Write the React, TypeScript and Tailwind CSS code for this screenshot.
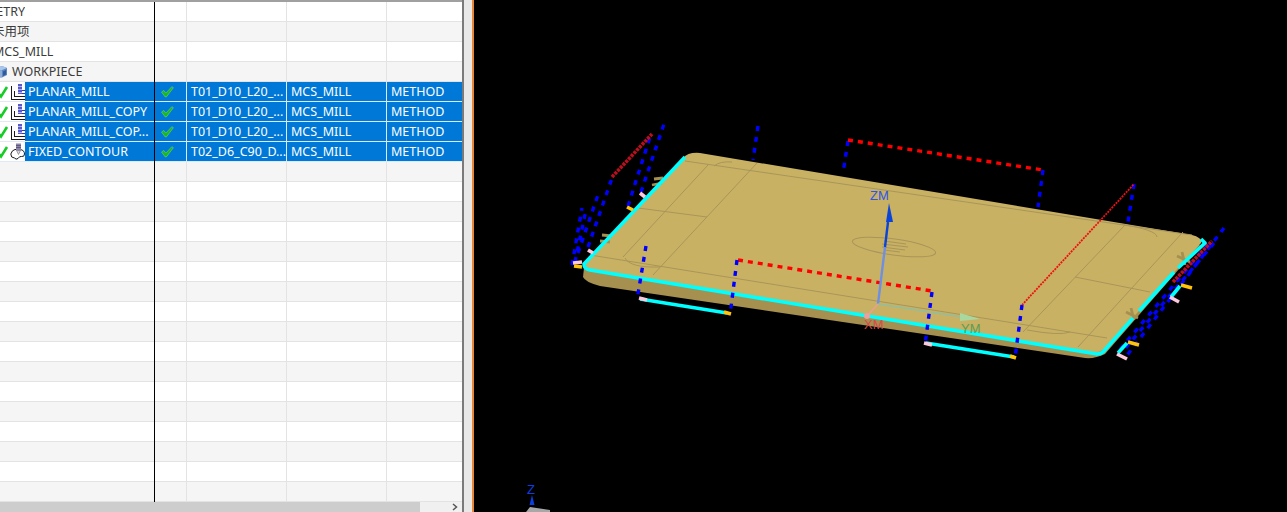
import React from "react";

const FONT = "font-['Noto_Sans','Noto_Sans_CJK_SC',sans-serif]";

const Check = ({ className }: { className: string }) => (
  <svg viewBox="0 0 12 12" className={className}>
    <path d="M0.5 6.5 L2.5 5 L4.5 7.5 L10 1.5 L11.5 2.5 L5 11 L3.8 11 Z" fill="#1cb81c" stroke="#8de88f" strokeWidth="0.4" />
  </svg>
);

const LeftCheck = () => (
  <svg viewBox="0 0 9 14" className="w-[9px] h-[14px] shrink-0">
    <path d="M-1 9 L1 11.5 L7 2" fill="none" stroke="#16cc26" strokeWidth="2.6" />
  </svg>
);

const PlanarIcon = () => (
  <svg viewBox="0 0 15 18" className="w-[15px] h-[18px] shrink-0" shapeRendering="crispEdges">
    <rect x="1" y="1" width="14" height="16" fill="#ffffff" />
    <path d="M1.5 3 V16.5 H15" fill="none" stroke="#1a1a1a" strokeWidth="1" />
    <path d="M4.5 8 V13.5 H15" fill="none" stroke="#1a1a1a" strokeWidth="1" />
    <rect x="8" y="1" width="4" height="10" fill="#5b5bc8" />
    <path d="M8 3.5 H12 M8 6.5 H12 M8 9.5 H12" stroke="#b2b2ee" strokeWidth="1" />
    <path d="M12 7.5 H15 M12 10.5 H15" stroke="#3434c0" strokeWidth="1" />
  </svg>
);

const ContourIcon = () => (
  <svg viewBox="0 0 15 18" className="w-[15px] h-[18px] shrink-0">
    <path d="M0.8 11 Q2 7 5 6.5 L10 6.5 Q14.5 7 14.5 11 Q14.5 14 11.5 13.5 Q9.5 13 8 15.5 Q6 17 4.5 15 Q0.8 15 0.8 11 Z" fill="#fff" stroke="#1a1a1a" strokeWidth="1" />
    <rect x="6" y="0.5" width="5" height="7" fill="#8c86a8" />
    <path d="M6 2.5 H11 M6 4.5 H11" stroke="#4b4670" strokeWidth="0.7" />
    <path d="M6.5 7.5 L8.5 11.5 L10.5 7.5 Z" fill="#d9d6e6" stroke="#555" strokeWidth="0.5" />
  </svg>
);

const CubeIcon = () => (
  <svg viewBox="0 0 13 14" className="w-[13px] h-[14px] shrink-0">
    <path d="M1 3.5 L7 1 L12 3 L12 10 L6 13 L1 10.5 Z" fill="#5b86c2" />
    <path d="M1 3.5 L7 1 L12 3 L6 5.5 Z" fill="#a9c7ea" />
    <path d="M6 5.5 V13" stroke="#dbe8f7" strokeWidth="0.8" />
    <path d="M8 6.5 L11 5 V9.5 L8 11 Z" fill="#2f5a9a" />
  </svg>
);

type Op = { name: string; tool: string; icon: "planar" | "contour" };

const ops: Op[] = [
  { name: "PLANAR_MILL", tool: "T01_D10_L20_...", icon: "planar" },
  { name: "PLANAR_MILL_COPY", tool: "T01_D10_L20_...", icon: "planar" },
  { name: "PLANAR_MILL_COP...", tool: "T01_D10_L20_...", icon: "planar" },
  { name: "FIXED_CONTOUR", tool: "T02_D6_C90_D...", icon: "contour" },
];

const Divs = () => (
  <>
    <div className="w-[32px] border-r border-[#e3e3e3]" />
    <div className="w-[100px] border-r border-[#e3e3e3]" />
    <div className="w-[100px] border-r border-[#e3e3e3]" />
    <div className="w-[75px]" />
  </>
);

const HeadRow = ({ children, alt }: { children: React.ReactNode; alt?: boolean }) => (
  <div className={`flex h-[20px] shrink-0 border-b border-[#e3e3e3] ${alt ? "bg-[#f5f5f5]" : "bg-white"}`}>
    <div className="w-[155px] pt-[1px] flex items-center overflow-hidden whitespace-nowrap text-[#3c3c3c]">{children}</div>
    <Divs />
  </div>
);

const OpRow = ({ op }: { op: Op }) => (
  <div className="flex h-[20px] shrink-0 bg-white">
    <div className="w-[155px] flex items-center border-b border-[#dfeaf5]">
      <LeftCheck />
      <div className="w-[16px] flex justify-center">
        {op.icon === "planar" ? <PlanarIcon /> : <ContourIcon />}
      </div>
      <div className="h-[19px] flex-1 bg-[#0078d7] text-white pl-[3px] whitespace-nowrap leading-[19px] overflow-hidden">{op.name}</div>
    </div>
    <div className="w-[32px] h-full bg-[#0078d7] border-r border-b border-[#dcebf7] flex items-center justify-center pr-[7px]">
      <Check className="w-[13px] h-[13px]" />
    </div>
    <div className="w-[100px] h-full bg-[#0078d7] border-r border-b border-[#dcebf7] text-white pl-[4px] leading-[19px] whitespace-nowrap overflow-hidden">{op.tool}</div>
    <div className="w-[100px] h-full bg-[#0078d7] border-r border-b border-[#dcebf7] text-white pl-[4px] leading-[19px]">MCS_MILL</div>
    <div className="w-[75px] h-full bg-[#0078d7] border-b border-[#dcebf7] text-white pl-[4px] leading-[19px]">METHOD</div>
  </div>
);

const Viewport = () => (
  <svg viewBox="474 0 813 512" className="w-full h-full block" shapeRendering="geometricPrecision">
    {/* back construction lines */}
    <g fill="none" stroke="#0000ff" strokeWidth="3.4" strokeDasharray="5 6">
      <path d="M572 265 L582 208" />
      <path d="M575 262 L586 210" />
      <path d="M578 253 L599 192" />
      <path d="M588 247 L612 178" />
      <path d="M628 206 L651 134" />
      <path d="M641 192 L664 124" />
      <path d="M758 126 L753 160" />
      <path d="M848 141 L843 173" />
      <path d="M1043 170 L1038 207" />
      <path d="M1134 184 L1128 222" />
      <path d="M1224 228 L1125 358" />
      <path d="M1208 244 L1118 352" />
      <path d="M1214 243 L1124 350" />
    </g>
    <path d="M612 177 L652 134" stroke="#b8101e" strokeWidth="3.6" strokeDasharray="3 1" />
    <path d="M1173 282 L1212 241" stroke="#b8101e" strokeWidth="3.6" strokeDasharray="3 1" />
    <path d="M848 140 L1043 170" stroke="#ff0000" strokeWidth="3.4" strokeDasharray="5 5" fill="none" />

    {/* plate */}
    <path d="M584 268 L583 277 Q585 282 600 286 L1085 358 Q1095 359 1105 354 L1200 245 Z" fill="#a5904f" />
    <path d="M683 158 Q688 152 700 153 L1192 235 Q1203 238 1201 243 L1106 347 Q1100 354 1088 353 L592 271 Q582 268 585 263 Z" fill="#c9b163" />

    {/* tabs */}
    <g stroke="#a5904f" strokeWidth="2.8" fill="none">
      <path d="M602 235 L612 236 M600 241 L610 242" />
      <path d="M654 179 L663 178 M652 185 L662 183" />
      <path d="M1126 312 L1138 318 M1131 308 L1134 320" />
      <path d="M1177 256 L1190 262 M1182 252 L1185 265" />
    </g>

    {/* engraved lines */}
    <g stroke="#a8955a" strokeWidth="1" fill="none">
      <path d="M685 161 L1192 235" />
      <path d="M590 255 L1107 338" />
      <path d="M708 165 L623 257" />
      <path d="M757 163 L653 275" />
      <path d="M638 208 L707 217" />
      <path d="M714 166 Q720 161 732 162" />
      <path d="M625 258 Q630 268 660 267" />
      <path d="M1125 225 L1023 332" />
      <path d="M1183 232 L1078 347" />
      <path d="M1075 277 L1150 292" />
      <path d="M1120 224 Q1157 230 1157 237" />
      <path d="M1027 330 Q1060 336 1070 332" />
      <ellipse cx="894" cy="247" rx="42" ry="8" transform="rotate(8 894 247)" />
      <path d="M884 241 L906 244 M882 244 L908 247 M882 247 L905 250 M884 250 L900 252" />
    </g>

    {/* cyan contour */}
    <g fill="none" stroke="#00ffff" strokeLinejoin="round" strokeWidth="3.6">
      <path d="M685 157 L584 264 Q584 269 590 270 L1097 354 Q1101 354 1103 352 L1133 318" />
      <path d="M1139 311 L1174 272" />
      <path d="M1178 268 L1205 243 L1201 239" />
      <path d="M640 299 L727 313" />
      <path d="M926 343 L1014 357" />
      <path d="M1127 343 L1118 353" />
      <path d="M1180 286 L1171 297" />
    </g>

    {/* front red and blue dashes */}
    <path d="M738 260 L932 291" stroke="#ff0000" strokeWidth="3.4" strokeDasharray="5 5" fill="none" />
    <path d="M1022 305 L1134 184" stroke="#ee1111" strokeWidth="1.8" strokeDasharray="2 1" fill="none" />
    <g fill="none" stroke="#0000ff" strokeWidth="3.4" strokeDasharray="5 6">
      <path d="M646 246 L637 300" />
      <path d="M737 260 L730 315" />
      <path d="M932 292 L925 345" />
      <path d="M1022 305 L1015 358" />
    </g>

    {/* end markers */}
    <g fill="none" strokeWidth="3.6">
      <g stroke="#fbc8dc">
        <path d="M639 298 L647 300" />
        <path d="M924 343 L932 345" />
        <path d="M573 263 L582 262" />
        <path d="M588 250 L593 253" />
        <path d="M640 193 L645 197" />
        <path d="M1117 354 L1127 359" />
        <path d="M1170 297 L1179 302" />
      </g>
      <g stroke="#ffc40a">
        <path d="M724 312 L731 314" />
        <path d="M1010 356 L1016 358" />
        <path d="M574 266 L582 267" />
        <path d="M627 207 L633 210" />
        <path d="M1128 342 L1139 345" />
        <path d="M1181 285 L1192 288" />
      </g>
    </g>

    {/* MCS axes */}
    <path d="M878 304 L885 247" stroke="#6f90e2" strokeWidth="2.4" />
    <path d="M885 247 L888 222" stroke="#0a45d8" strokeWidth="2.4" />
    <path d="M889 203 L893 222 L886 222 Z" fill="#0a45d8" />
    <path d="M878 304 L962 317" stroke="#8fbf9f" strokeWidth="1.6" />
    <path d="M960 313 L980 319 L960 321 Z" fill="#a8d8a0" />
    <path d="M878 304 L868 315" stroke="#eaa08f" strokeWidth="1.6" />
    <circle cx="867" cy="316" r="3" fill="#eaa0a0" />
    <g fontFamily="'Liberation Sans',sans-serif" fontSize="13">
      <text x="870" y="200" fill="#2f55e6">ZM</text>
      <text x="864" y="329" fill="#d84a4a">XM</text>
      <text x="961" y="333" fill="#5b9d52">YM</text>
    </g>

    {/* triad */}
    <text x="527" y="494" fontFamily="'Liberation Sans',sans-serif" fontSize="13" fill="#0a3fe0">Z</text>
    <path d="M532 495 L534.5 505 L529.5 505 Z" fill="#0a3fe0" />
    <path d="M526 512 L530 507 L550 510 L550 512 Z" fill="#a8a8a8" />
  </svg>
);

export default function App() {
  const blanks = Array.from({ length: 17 }, (_, i) => i);
  return (
    <div className={`flex w-[1287px] h-[512px] overflow-hidden bg-black text-[12.5px] ${FONT}`}>
      <div className="w-[462px] h-full flex flex-col bg-white shrink-0">
        <div className="relative flex-1 min-h-0 flex flex-col border-t-2 border-[#a0a0a0]">
          <HeadRow>
            <div className="w-[25px] flex justify-end overflow-hidden">GEOMETRY</div>
          </HeadRow>
          <HeadRow alt>
            <div className="-ml-[8px]">未用项</div>
          </HeadRow>
          <HeadRow>
            <div className="-ml-[7px]">MCS_MILL</div>
          </HeadRow>
          <HeadRow alt>
            <div className="-ml-[5px] flex items-center gap-[4px]">
              <CubeIcon />
              <span>WORKPIECE</span>
            </div>
          </HeadRow>
          {ops.map((op) => (
            <OpRow key={op.name} op={op} />
          ))}
          {blanks.map((i) => (
            <HeadRow key={i} alt={i % 2 === 0}>
              <span />
            </HeadRow>
          ))}
          <div className="absolute left-[154px] top-0 bottom-0 w-px bg-black" />
        </div>
        <div className="h-[10px] shrink-0 flex bg-[#f0f0f0]">
          <div className="w-[420px] bg-[#cdcdcd]" />
          <div className="flex-1 flex items-center justify-end pr-[4px]">
            <svg viewBox="0 0 6 8" className="w-[6px] h-[8px]">
              <path d="M1 1 L4.5 4 L1 7" fill="none" stroke="#555" strokeWidth="1.5" />
            </svg>
          </div>
        </div>
      </div>
      <div className="w-[2px] bg-[#7a7a7a] shrink-0" />
      <div className="w-[8px] bg-[#e8e8e8] shrink-0" />
      <div className="w-[2px] bg-[#e8893a] shrink-0" />
      <div className="flex-1 bg-black min-w-0">
        <Viewport />
      </div>
    </div>
  );
}
